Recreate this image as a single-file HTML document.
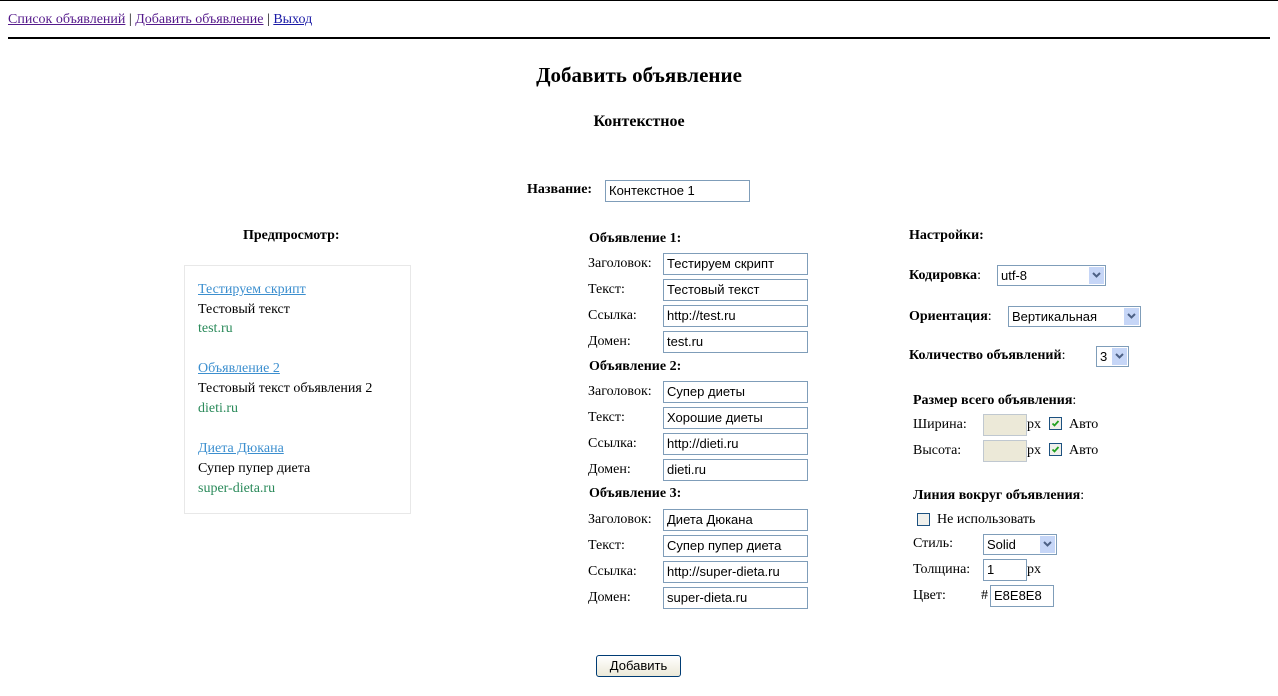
<!DOCTYPE html>
<html><head><meta charset="utf-8"><style>
body{margin:0;width:1278px;height:696px;position:relative;background:#fff;font-family:"Liberation Serif",serif;font-size:14px;color:#000;overflow:hidden}
.a{position:absolute;line-height:18px;white-space:nowrap}
.b{font-weight:bold}
.i{position:absolute;border:1px solid #7f9db9;background:#fff;font-family:"Liberation Sans",sans-serif;font-size:13px;line-height:19px;padding-left:3px;box-sizing:border-box;white-space:nowrap}
.s{position:absolute;border:1px solid #7f9db9;background:#fff;font-family:"Liberation Sans",sans-serif;font-size:13px;line-height:19px;padding-left:3px;box-sizing:border-box}
.s:after{content:"";position:absolute;right:1px;top:1px;width:15px;height:17px;background:#c6d6f7}
.s svg{position:absolute;right:4px;top:6px;z-index:2}
.cb{position:absolute;width:11px;height:11px;border:1px solid #1c5180;background:#f0f0ec}
a{text-decoration:underline}
.lk{color:#3c8fcf}
.dm{color:#2a8a5a}
</style></head><body>
<div style="position:absolute;left:0;top:0;width:1278px;height:1px;background:#000"></div>
<div class="a" style="left:8px;top:11px;color:#000">
<a style="color:#551a8b">Список объявлений</a> | <a style="color:#551a8b">Добавить объявление</a> | <a style="color:#1a1aa6">Выход</a></div>
<div style="position:absolute;left:8px;top:37px;width:1262px;height:2px;background:#000"></div>
<div class="a b" style="left:0;width:1278px;text-align:center;top:62px;font-size:21px;line-height:26px">Добавить объявление</div>
<div class="a b" style="left:0;width:1278px;text-align:center;top:113px;font-size:16px">Контекстное</div>
<div class="a b" style="left:527px;top:181px">Название:</div>
<div class="i" style="left:605px;top:180px;width:145px;height:22px">Контекстное 1</div>

<div class="a b" style="left:243px;top:227px">Предпросмотр:</div>
<div style="position:absolute;left:184px;top:265px;width:225px;height:247px;border:1px solid #e8e8e8"></div>
<div class="a" style="left:198px;top:281px"><a class="lk">Тестируем скрипт</a></div>
<div class="a" style="left:198px;top:301px">Тестовый текст</div>
<div class="a dm" style="left:198px;top:320px">test.ru</div>
<div class="a" style="left:198px;top:360px"><a class="lk">Объявление 2</a></div>
<div class="a" style="left:198px;top:380px">Тестовый текст объявления 2</div>
<div class="a dm" style="left:198px;top:400px">dieti.ru</div>
<div class="a" style="left:198px;top:440px"><a class="lk">Диета Дюкана</a></div>
<div class="a" style="left:198px;top:460px">Супер пупер диета</div>
<div class="a dm" style="left:198px;top:480px">super-dieta.ru</div>

<div class="a b" style="left:589px;top:230px">Объявление 1:</div>
<div class="a" style="left:588px;top:255px">Заголовок:</div><div class="i" style="left:663px;top:253px;width:145px;height:22px">Тестируем скрипт</div>
<div class="a" style="left:588px;top:281px">Текст:</div><div class="i" style="left:663px;top:279px;width:145px;height:22px">Тестовый текст</div>
<div class="a" style="left:588px;top:307px">Ссылка:</div><div class="i" style="left:663px;top:305px;width:145px;height:22px">http://test.ru</div>
<div class="a" style="left:588px;top:333px">Домен:</div><div class="i" style="left:663px;top:331px;width:145px;height:22px">test.ru</div>
<div class="a b" style="left:589px;top:358px">Объявление 2:</div>
<div class="a" style="left:588px;top:383px">Заголовок:</div><div class="i" style="left:663px;top:381px;width:145px;height:22px">Супер диеты</div>
<div class="a" style="left:588px;top:409px">Текст:</div><div class="i" style="left:663px;top:407px;width:145px;height:22px">Хорошие диеты</div>
<div class="a" style="left:588px;top:435px">Ссылка:</div><div class="i" style="left:663px;top:433px;width:145px;height:22px">http://dieti.ru</div>
<div class="a" style="left:588px;top:461px">Домен:</div><div class="i" style="left:663px;top:459px;width:145px;height:22px">dieti.ru</div>
<div class="a b" style="left:589px;top:485px">Объявление 3:</div>
<div class="a" style="left:588px;top:511px">Заголовок:</div><div class="i" style="left:663px;top:509px;width:145px;height:22px">Диета Дюкана</div>
<div class="a" style="left:588px;top:537px">Текст:</div><div class="i" style="left:663px;top:535px;width:145px;height:22px">Супер пупер диета</div>
<div class="a" style="left:588px;top:563px">Ссылка:</div><div class="i" style="left:663px;top:561px;width:145px;height:22px">http://super-dieta.ru</div>
<div class="a" style="left:588px;top:589px">Домен:</div><div class="i" style="left:663px;top:587px;width:145px;height:22px">super-dieta.ru</div>

<div class="a b" style="left:909px;top:227px">Настройки:</div>
<div class="a" style="left:909px;top:267px"><b>Кодировка</b>:</div>
<div class="s" style="left:997px;top:265px;width:109px;height:21px">utf-8<svg width="9" height="6"><path d="M1 1L4.5 4.5L8 1" stroke="#4d6185" stroke-width="2" fill="none"/></svg></div>
<div class="a" style="left:909px;top:308px"><b>Ориентация</b>:</div>
<div class="s" style="left:1008px;top:306px;width:133px;height:21px">Вертикальная<svg width="9" height="6"><path d="M1 1L4.5 4.5L8 1" stroke="#4d6185" stroke-width="2" fill="none"/></svg></div>
<div class="a" style="left:909px;top:347px"><b>Количество объявлений</b>:</div>
<div class="s" style="left:1096px;top:346px;width:33px;height:21px">3<svg width="9" height="6"><path d="M1 1L4.5 4.5L8 1" stroke="#4d6185" stroke-width="2" fill="none"/></svg></div>
<div class="a" style="left:913px;top:392px"><b>Размер всего объявления</b>:</div>
<div class="a" style="left:913px;top:416px">Ширина:</div>
<div class="i" style="left:983px;top:414px;width:44px;height:22px;background:#ece9d8;border-color:#c0c8d0"></div>
<div class="a" style="left:1027px;top:416px">px</div>
<div class="cb" style="left:1049px;top:417px"><svg width="11" height="11" style="position:absolute;left:0;top:0"><path d="M2.5 5.5L4.5 7.5L8.5 3" stroke="#21a121" stroke-width="1.8" fill="none"/></svg></div>
<div class="a" style="left:1069px;top:416px">Авто</div>
<div class="a" style="left:913px;top:442px">Высота:</div>
<div class="i" style="left:983px;top:440px;width:44px;height:22px;background:#ece9d8;border-color:#c0c8d0"></div>
<div class="a" style="left:1027px;top:442px">px</div>
<div class="cb" style="left:1049px;top:443px"><svg width="11" height="11" style="position:absolute;left:0;top:0"><path d="M2.5 5.5L4.5 7.5L8.5 3" stroke="#21a121" stroke-width="1.8" fill="none"/></svg></div>
<div class="a" style="left:1069px;top:442px">Авто</div>
<div class="a" style="left:913px;top:487px"><b>Линия вокруг объявления</b>:</div>
<div class="cb" style="left:917px;top:513px"></div>
<div class="a" style="left:937px;top:511px">Не использовать</div>
<div class="a" style="left:913px;top:535px">Стиль:</div>
<div class="s" style="left:983px;top:534px;width:74px;height:21px">Solid<svg width="9" height="6"><path d="M1 1L4.5 4.5L8 1" stroke="#4d6185" stroke-width="2" fill="none"/></svg></div>
<div class="a" style="left:913px;top:561px">Толщина:</div>
<div class="i" style="left:983px;top:559px;width:44px;height:22px">1</div>
<div class="a" style="left:1027px;top:561px">px</div>
<div class="a" style="left:913px;top:587px">Цвет:</div>
<div class="a" style="left:981px;top:587px">#</div>
<div class="i" style="left:990px;top:585px;width:64px;height:22px">E8E8E8</div>

<div style="position:absolute;left:596px;top:655px;width:85px;height:22px;border:1px solid #003c74;border-radius:3px;background:linear-gradient(#fff,#ece9d8);box-sizing:border-box;font-family:'Liberation Sans',sans-serif;font-size:13px;line-height:20px;text-align:center">Добавить</div>
</body></html>
